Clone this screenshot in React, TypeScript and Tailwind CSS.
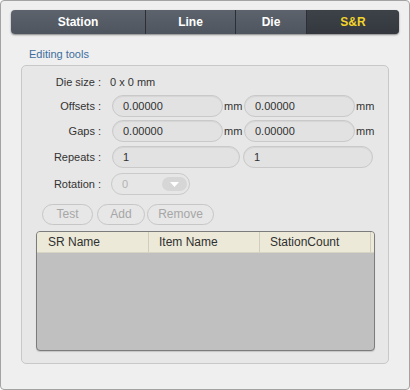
import React from "react";

function Field({ w, value, disabled }: { w: string; value: string; disabled?: boolean }) {
  return (
    <div
      className={`${w} h-[22px] rounded-full border border-[#c9c9c9] bg-[#e2e2e2] shadow-[inset_0_1px_1px_rgba(0,0,0,0.06)] flex items-center pl-[10px] ${disabled ? "text-[#b0b0b0]" : "text-[#303030]"}`}
    >
      {value}
    </div>
  );
}

export default function App() {
  return (
    <div className="w-[410px] h-[390px] border border-[#a3a3a3] rounded-[4px] bg-[#efefef] font-['Liberation_Sans',Arial,sans-serif] text-[11px] text-[#333] pt-[9px] pl-[10px] overflow-hidden">
      {/* Tabs */}
      <div className="w-[388px] h-[24px] rounded-[4px] flex overflow-hidden bg-gradient-to-b from-[#5c636d] to-[#4e555f] shadow-[0_1px_2px_rgba(0,0,0,0.45)] text-[12px] font-bold">
        <div className="w-[135px] flex items-center justify-center text-white border-r border-[#2c3036]">Station</div>
        <div className="w-[90px] flex items-center justify-center text-white border-r border-[#2c3036]">Line</div>
        <div className="w-[71px] flex items-center justify-center text-white border-r border-[#2c3036]">Die</div>
        <div className="flex-1 flex items-center justify-center text-[#f2d42a] bg-gradient-to-b from-[#3d4249] to-[#34383e]">S&amp;R</div>
      </div>

      <div className="ml-[18px] mt-[13px] h-[15px] leading-[15px] text-[#3d6e9e]">Editing tools</div>

      {/* Group box */}
      <div className="ml-[10px] mt-[3px] w-[368px] h-[299px] border border-[#c8c8c8] rounded-[5px] bg-[#e7e7e7]">
        {/* Die size */}
        <div className="flex items-center h-[22px] mt-[5px]">
          <div className="w-[79px] text-right">Die size :</div>
          <div className="ml-[9px]">0 x 0 mm</div>
        </div>
        {/* Offsets */}
        <div className="flex items-center h-[22px] mt-[2px]">
          <div className="w-[79px] text-right">Offsets :</div>
          <div className="ml-[11px]"><Field w="w-[111px]" value="0.00000" /></div>
          <div className="w-[21px] pl-[1px]">mm</div>
          <Field w="w-[111px]" value="0.00000" />
          <div className="pl-[1px]">mm</div>
        </div>
        {/* Gaps */}
        <div className="flex items-center h-[22px] mt-[3px]">
          <div className="w-[79px] text-right">Gaps :</div>
          <div className="ml-[11px]"><Field w="w-[111px]" value="0.00000" /></div>
          <div className="w-[21px] pl-[1px]">mm</div>
          <Field w="w-[111px]" value="0.00000" />
          <div className="pl-[1px]">mm</div>
        </div>
        {/* Repeats */}
        <div className="flex items-center h-[22px] mt-[4px]">
          <div className="w-[79px] text-right">Repeats :</div>
          <div className="ml-[11px]"><Field w="w-[128px]" value="1" /></div>
          <div className="ml-[3px]"><Field w="w-[130px]" value="1" /></div>
        </div>
        {/* Rotation */}
        <div className="flex items-center h-[22px] mt-[5px]">
          <div className="w-[79px] text-right">Rotation :</div>
          <div className="ml-[10px] w-[79px] h-[22px] rounded-full border border-[#cacaca] bg-[#e6e6e6] flex items-center pl-[10px] pr-[2px] text-[#b2b2b2]">
            <span className="flex-1">0</span>
            <div className="w-[25px] h-[14px] rounded-full bg-[#d6d6d6] flex items-center justify-center">
              <svg width="9" height="5" viewBox="0 0 9 5">
                <path d="M0 0 L9 0 L4.5 5 Z" fill="#ffffff" />
              </svg>
            </div>
          </div>
        </div>
        {/* Buttons */}
        <div className="flex items-center h-[22px] mt-[8px] ml-[20px] text-[#a6a6a6] text-[12px]">
          <div className="w-[51px] h-[21px] rounded-full border border-[#c6c6c6] flex items-center justify-center">Test</div>
          <div className="ml-[4px] w-[48px] h-[21px] rounded-full border border-[#c6c6c6] flex items-center justify-center">Add</div>
          <div className="ml-[2px] w-[67px] h-[21px] rounded-full border border-[#c6c6c6] flex items-center justify-center">Remove</div>
        </div>
        {/* Table */}
        <div className="ml-[14px] mt-[6px] w-[339px] h-[120px] border border-[#7c7c7c] rounded-[4px] bg-[#c0c0c0] overflow-hidden shadow-[0_1px_1px_rgba(0,0,0,0.15)]">
          <div className="flex h-[21px] bg-[#ece9d8] border-b border-[#d8d4c4] text-[#303030] text-[12px]">
            <div className="w-[112px] border-r border-[#d2cebd] flex items-center pl-[11px]">SR Name</div>
            <div className="w-[111px] border-r border-[#d2cebd] flex items-center pl-[10px]">Item Name</div>
            <div className="w-[111px] border-r border-[#d2cebd] flex items-center pl-[10px]">StationCount</div>
            <div className="flex-1" />
          </div>
        </div>
      </div>
    </div>
  );
}
